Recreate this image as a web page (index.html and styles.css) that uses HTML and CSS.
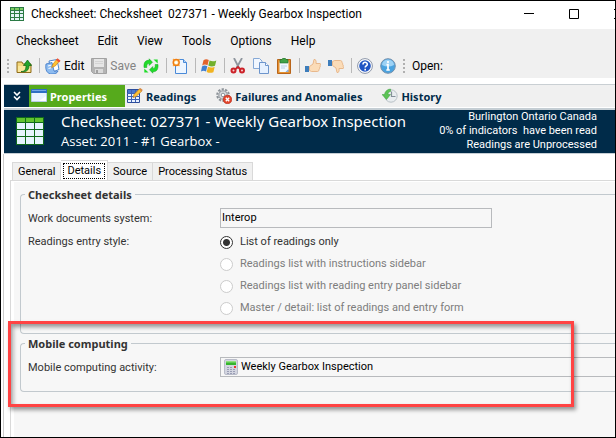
FILE: index.html
```html
<!DOCTYPE html>
<html lang="en">
<head>
    <meta charset="UTF-8">
    <meta name="viewport" content="width=device-width, initial-scale=1.0">
    <title>Checksheet: Checksheet 027371 - Weekly Gearbox Inspection</title>
    <link rel="stylesheet" href="styles.css">
</head>
<body>
<div class="window">
    <header class="titlebar">
        <svg class="title-icon" viewBox="0 0 14 14">
            <rect width="14" height="14" fill="#2b7a45"/>
            <path d="M1 1h3v2H1zM5 1h4v2H5zM10 1h3v2h-3z" fill="#7ccc62"/>
            <path d="M1 4h3v2H1zM5 4h4v2H5zM10 4h3v2h-3zM1 7h3v3H1zM5 7h4v3H5zM10 7h3v3h-3zM1 11h3v2H1zM5 11h4v2H5zM10 11h3v2h-3z" fill="#e3f3f8"/>
        </svg>
        <h1>Checksheet: Checksheet  027371 - Weekly Gearbox Inspection</h1>
        <div class="controls">
            <button type="button" aria-label="Minimize"><svg width="10" height="10" viewBox="0 0 10 10"><path d="M0 4.500h10" stroke="#000"/></svg></button>
            <button type="button" aria-label="Maximize"><svg width="10" height="10" viewBox="0 0 10 10"><path d="M.5.5h9v9h-9z" fill="none" stroke="#000"/></svg></button>
            <button type="button" aria-label="Close"><svg width="10" height="10" viewBox="0 0 10 10"><path d="M0 0l10 10M10 0L0 10" stroke="#000"/></svg></button>
        </div>
    </header>

    <nav class="menubar">
        <button type="button">Checksheet</button>
        <button type="button">Edit</button>
        <button type="button">View</button>
        <button type="button">Tools</button>
        <button type="button">Options</button>
        <button type="button">Help</button>
    </nav>

    <div class="toolbar">
        <span class="grip"></span>
        <button type="button" aria-label="Up">
            <svg viewBox="0 0 16 16">
                <path d="M1 4h5l1 2h8v8.500H1z" fill="#f3d67b" stroke="#8f6d1c"/>
                <path d="M2 8h12v6H2z" fill="#fae79c"/>
                <path d="M5 13.500c4 0 5-2 5-6H7.500L11.500 2l4 5.500H13c0 5-3 7-8 6z" fill="#25a52b" stroke="#0c6414" stroke-width=".7"/>
            </svg>
        </button>
        <span class="sep"></span>
        <button type="button">
            <svg viewBox="0 0 16 16">
                <path d="M4 3l8-1.500 2 10-8 3z" fill="#fff" stroke="#4d86cf"/>
                <path d="M1 6l6-1.500L9 13c2 1 3 1 4 0-1 2.500-3 3-6 3C2 16 0 12 1 6z" fill="#8ebcf0" stroke="#3a76c8" stroke-width=".8"/>
                <path d="M3 8l3-.8M3.500 10.500l3-.8M8 5l3-.6M9 8l3-.6" stroke="#fff"/>
                <path d="M6.500 9.500L8 6l4-5 2.500 2-4.200 5z" fill="#ffc233" stroke="#c47811" stroke-width=".6"/>
                <path d="M11 2l1.500-1.700 3 2.400L14 4.500z" fill="#f0503a"/>
            </svg>
            Edit
        </button>
        <button type="button" class="save" disabled>
            <svg viewBox="0 0 16 16">
                <path d="M.5.5h15v15h-13l-2-2z" fill="#b4b4b4" stroke="#a2a2a2"/>
                <path d="M3 1h10v8H3z" fill="#e6e6e6"/>
                <path d="M4 3.500h8M4 5.500h8" stroke="#d4d4d4"/>
                <path d="M4 11h8v4H4z" fill="#dadada"/>
                <path d="M5 12h2v3H5z" fill="#a0a0a0"/>
            </svg>
            Save
        </button>
        <button type="button" aria-label="Refresh">
            <svg viewBox="0 0 16 16">
                <path d="M1 9.500C.6 4.500 2.500 2 6.200 2.300V.8L9.500 4.200 6.200 7.500V5.600C4.300 5.400 3.600 6.600 3.800 9.500z" fill="#20dc2a" stroke="#0fa51b" stroke-width=".5"/>
                <path d="M15 6.500c.4 5-1.500 7.500-5.200 7.200v1.500L6.500 11.800 9.800 8.500v1.900c1.900.2 2.600-1 2.400-3.900z" fill="#20dc2a" stroke="#0fa51b" stroke-width=".5"/>
                <path d="M10.500 1.500h4.200v4zM5.500 14.500H1.300v-4z" fill="#20dc2a"/>
            </svg>
        </button>
        <span class="sep"></span>
        <button type="button" aria-label="New">
            <svg viewBox="0 0 16 16">
                <path d="M3.500 1.500h8l3 3v11h-11z" fill="#eef6ff" stroke="#4a8ad8"/>
                <path d="M11.500 1.500v3h3" fill="#b8d7f8" stroke="#4a8ad8"/>
                <path d="M1 1l6.500 7M7.500 1L1 8" stroke="#ffae3b" stroke-width="1.200"/>
                <circle cx="4.200" cy="4.500" r="3" fill="#ffd98a" stroke="#f07c13" stroke-width="1.400"/>
                <circle cx="4.200" cy="4.500" r="1.500" fill="#fff"/>
            </svg>
        </button>
        <span class="sep"></span>
        <button type="button" aria-label="Windows">
            <svg viewBox="0 0 16 16">
                <path d="M2.500 2.200c2-1.400 3.500-1.200 5.300-.2L6.500 7.200c-2-1-3.500-1-5.300.2z" fill="#e2632b"/>
                <path d="M8.600 2.500c2 1 4 1.200 6.700 0L14 7.800c-2.500 1-4.600.8-6.700-.2z" fill="#72b02c"/>
                <path d="M1 8.400c2-1.400 3.500-1.200 5.300-.2L5 13.400c-2-1-3.200-1-5 .2z" fill="#3f7fd0"/>
                <path d="M7 8.700c2 1 4 1.200 6.700 0l-1.300 5.500c-2.500 1-4.600.8-6.700-.2z" fill="#f1b321"/>
            </svg>
        </button>
        <span class="sep"></span>
        <button type="button" aria-label="Cut">
            <svg viewBox="0 0 16 16">
                <path d="M4 0l5 10M12 0L6.500 10" stroke="#8f969e" stroke-width="1.800"/>
                <circle cx="3.500" cy="12.500" r="2" fill="#f6d2d2" stroke="#cc2229" stroke-width="2"/>
                <circle cx="12" cy="12.500" r="2" fill="#f6d2d2" stroke="#cc2229" stroke-width="2"/>
                <path d="M5 11.500L8 9l2.500 2.500" fill="none" stroke="#cc2229" stroke-width="1.800"/>
            </svg>
        </button>
        <button type="button" aria-label="Copy">
            <svg viewBox="0 0 16 16">
                <path d="M.5.5h6l2.500 2.500v7.500H.5z" fill="#f1f7ff" stroke="#86a9d6"/>
                <path d="M6.500 4.500h6l3 3v8h-9z" fill="#e6f1ff" stroke="#6d95cc"/>
                <path d="M12.500 4.500v3h3" fill="#fff" stroke="#6d95cc"/>
            </svg>
        </button>
        <button type="button" aria-label="Paste">
            <svg viewBox="0 0 16 16">
                <path d="M1.500 1.500h13v14h-13z" fill="#e5902e" stroke="#b9651a"/>
                <path d="M3.500 3.500h9v8l-2.500 2.500H3.500z" fill="#f2f9ff"/>
                <path d="M5 8h6M5 10h4" stroke="#b9cfe6"/>
                <path d="M12.500 11v3H9.500z" fill="#8ab4e4"/>
                <path d="M4 1.500h2L7 0h2l1 1.500h2V5H4z" fill="#41a348" stroke="#1f6c2b" stroke-width=".6"/>
            </svg>
        </button>
        <span class="sep"></span>
        <button type="button" aria-label="Approve">
            <svg viewBox="0 0 16 16">
                <path d="M0 8h4v6H0z" fill="#3d7dbb"/>
                <path d="M4.500 8.500L8 6l1-4.500c1.500-.5 2.500 1 2 4h4c1 0 .8 2 0 2 .5 1 .3 2-.5 2.200.3 1 0 1.800-.7 2 .2 1-.3 1.800-1.300 1.800h-6l-2-1z" fill="#fbdcb8" stroke="#e6b283" stroke-width=".9"/>
            </svg>
        </button>
        <button type="button" aria-label="Reject">
            <svg viewBox="0 0 16 16">
                <path d="M0 2h4v6H0z" fill="#3d7dbb"/>
                <path d="M4.500 7.500L8 10l1 4.500c1.500.5 2.500-1 2-4h4c1 0 .8-2 0-2 .5-1 .3-2-.5-2.200.3-1 0-1.800-.7-2 .2-1-.3-1.800-1.300-1.800h-6l-2 1z" fill="#fbdcb8" stroke="#e6b283" stroke-width=".9"/>
            </svg>
        </button>
        <span class="sep"></span>
        <button type="button" aria-label="Help">
            <svg viewBox="0 0 16 16">
                <circle cx="8" cy="8" r="7.400" fill="#fff" stroke="#8b95a8"/>
                <circle cx="8" cy="8" r="5.800" fill="#2155c4"/>
                <path d="M6 6.500c0-3 4.300-2.800 4.300-.3C10.300 7.800 8.200 8 8.200 9.500M8.200 10.800v1.600" fill="none" stroke="#fff" stroke-width="1.600"/>
            </svg>
        </button>
        <button type="button" aria-label="Info">
            <svg viewBox="0 0 16 16">
                <circle cx="8" cy="8" r="7.300" fill="#4aa3e0" stroke="#7690ab"/>
                <path d="M2 7a6 5.500 0 0 1 12 0q-6 3-12 0z" fill="#9dd2f5"/>
                <path d="M8 3v2M6.500 6.700H8V12M6.300 12h3.500" fill="none" stroke="#fff" stroke-width="1.700"/>
            </svg>
        </button>
        <span class="grip"></span>
        <span class="open-label">Open:</span>
    </div>

    <nav class="views">
        <button type="button" class="expand" aria-label="More views">
            <svg width="8" height="10" viewBox="0 0 8 10"><path d="M1 1l3 3 3-3M1 5.500l3 3 3-3" fill="none" stroke="#fff" stroke-width="1.600"/></svg>
        </button>
        <a href="#" class="view current">
            <svg viewBox="0 0 16 16">
                <path d="M.5 1.500h15v12H.5z" fill="#eaf4ff" stroke="#b9cde6"/>
                <path d="M0 1h16v4H0z" fill="#2f6fc4"/>
                <path d="M1 2h14v1H1z" fill="#75a8e6"/>
                <path d="M8 13l7-5v5z" fill="#fff"/>
            </svg>
            Properties
        </a>
        <a href="#" class="view">
            <svg viewBox="0 0 16 16">
                <path d="M.5 1.500h12v13H.5z" fill="#e8f1ff" stroke="#2c4d9c"/>
                <path d="M1 2h11v3H1z" fill="#4a78d0"/>
                <path d="M0 5.500h13M0 8.500h13M0 11.500h13M4.500 2v12M8.500 2v12" stroke="#3e62b4"/>
                <path d="M6 9.500L7 6.500 12.500.8l2.500 2L9 8.600z" fill="#ffc233" stroke="#b8741a" stroke-width=".7"/>
                <path d="M12 1.300L13.300 0l2.500 2.100L14.500 3.500z" fill="#d78b45"/>
            </svg>
            Readings
        </a>
        <a href="#" class="view">
            <svg viewBox="0 0 16 16">
                <circle cx="7" cy="7" r="5.800" fill="none" stroke="#8c9298" stroke-width="2" stroke-dasharray="2.300 1.300"/>
                <circle cx="7" cy="7" r="4.200" fill="#d9dcdf" stroke="#8c9298"/>
                <circle cx="7" cy="7" r="1.800" fill="#fff" stroke="#8c9298"/>
                <circle cx="11.500" cy="11.500" r="4.300" fill="#e2452c" stroke="#b42513" stroke-width=".6"/>
                <path d="M9.800 9.800l3.400 3.400M13.200 9.800l-3.400 3.400" stroke="#fff" stroke-width="1.400"/>
            </svg>
            Failures and Anomalies
        </a>
        <a href="#" class="view">
            <svg viewBox="0 0 16 16">
                <circle cx="9" cy="8" r="6.200" fill="#e9edf0" stroke="#b9c1c6"/>
                <path d="M9.500 3.500V8.500h4" fill="none" stroke="#84909a" stroke-width="1.200"/>
                <path d="M8.500 1C5 1.200 3 3.500 2.500 6.500H0L4.500 11.500 8.500 6.500H6C6 4.700 7 3.800 8.500 3.500z" fill="#5cc455" stroke="#3d9c3c" stroke-width=".5"/>
            </svg>
            History
        </a>
    </nav>

    <section class="banner">
        <svg class="banner-icon" viewBox="0 0 28 28">
            <rect width="28" height="28" fill="#0f6a1c"/>
            <path d="M1 1h8v4H1zM10 1h8v4h-8zM19 1h8v4h-8z" fill="#62c52f"/>
            <path d="M1 6h8v6H1zM10 6h8v6h-8zM19 6h8v6h-8zM1 13h8v6H1zM10 13h8v6h-8zM19 13h8v6h-8zM1 20h8v7H1zM10 20h8v7h-8zM19 20h8v7h-8z" fill="#e6f4ff"/>
        </svg>
        <div class="banner-text">
            <h2>Checksheet: 027371 - Weekly Gearbox Inspection</h2>
            <p>Asset: 2011 - #1 Gearbox -</p>
        </div>
        <div class="banner-status">
            <p>Burlington Ontario Canada</p>
            <p>0% of indicators  have been read</p>
            <p>Readings are Unprocessed</p>
        </div>
    </section>

    <main class="content">
        <div class="tabs" role="tablist">
            <button type="button" role="tab">General</button>
            <button type="button" role="tab" class="active" aria-selected="true"><span>Details</span></button>
            <button type="button" role="tab">Source</button>
            <button type="button" role="tab">Processing Status</button>
        </div>
        <form class="panel">
            <fieldset>
                <legend>Checksheet details</legend>
                <div class="row">
                    <label for="system">Work documents system:</label>
                    <input type="text" id="system" class="text-field" value="Interop" readonly>
                </div>
                <div class="row style-row">
                    <span id="style-label">Readings entry style:</span>
                    <div class="options" role="radiogroup" aria-labelledby="style-label">
                        <label><input type="radio" name="style" checked>List of readings only</label>
                        <label class="off"><input type="radio" name="style" disabled>Readings list with instructions sidebar</label>
                        <label class="off"><input type="radio" name="style" disabled>Readings list with reading entry panel sidebar</label>
                        <label class="off"><input type="radio" name="style" disabled>Master / detail: list of readings and entry form</label>
                    </div>
                </div>
            </fieldset>
            <fieldset>
                <legend>Mobile computing</legend>
                <div class="row">
                    <label for="activity">Mobile computing activity:</label>
                    <div class="lookup">
                        <svg viewBox="0 0 14 16">
                            <rect x=".5" y=".5" width="13" height="15" rx="1.500" fill="#d3d5e0" stroke="#b9bcc9"/>
                            <path d="M2 2h10v4H2z" fill="#35b52d"/>
                            <path d="M2 2h10v1.500H2z" fill="#8fe07c"/>
                            <path d="M3 8.500h5M3 10.500h8M3 12.500h8M3 14.500h8" stroke="#9a9eb5" stroke-dasharray="2 1"/>
                            <path d="M10 7h2v2h-2z" fill="#e8342c"/>
                        </svg>
                        <input type="text" id="activity" value="Weekly Gearbox Inspection">
                    </div>
                </div>
            </fieldset>
            <div class="highlight"></div>
        </form>
    </main>
</div>
</body>
</html>
```
FILE: styles.css
```css
* {
    box-sizing: border-box;
}

body {
    margin: 0;
    font-family: Roboto, "Open Sans", sans-serif;
    font-size: 11px;
    color: #333;
}

h1, h2, p {
    margin: 0;
    font-weight: normal;
    white-space: pre;
}

button, input {
    font: inherit;
    color: inherit;
}

button {
    border: 0;
    padding: 0;
    background: none;
}

svg {
    display: block;
    flex: none;
}

.window {
    display: flex;
    flex-direction: column;
    min-height: 100vh;
    border: 1px solid #000;
    background-color: #fff;
    overflow: hidden;
}

/* title bar */
.titlebar {
    display: flex;
    align-items: center;
    height: 28px;
    padding: 0 0 2px 9px;
    color: #000;
}

.title-icon {
    width: 14px;
    height: 14px;
}

.titlebar h1 {
    flex: 1;
    margin-left: 7px;
    font-size: 12px;
}

.controls {
    display: flex;
    margin-right: -26px;
}

.controls button {
    display: flex;
    align-items: center;
    justify-content: center;
    width: 45px;
    height: 24px;
}

/* menu and toolbar */
.menubar {
    display: flex;
    align-items: center;
    gap: 19px;
    height: 24px;
    padding-left: 15px;
    background-color: #f0f0f0;
    font-size: 12px;
    color: #000;
}

.toolbar {
    display: flex;
    align-items: center;
    gap: 7px;
    height: 26px;
    padding: 0 6px;
    border-bottom: 1px solid #fff;
    background-color: #f0f0f0;
    font-size: 12px;
    color: #000;
}

.toolbar button {
    display: flex;
    align-items: center;
    gap: 3px;
}

.toolbar svg {
    width: 16px;
    height: 16px;
}

.toolbar .save {
    color: #838383;
}

.toolbar .sep + button {
    margin-left: -2px;
}

.sep {
    width: 1px;
    height: 15px;
    background-color: #b8b8b8;
}

.grip {
    width: 2px;
    height: 14px;
    background: repeating-linear-gradient(#b0b0b0 0 2px, transparent 2px 4px);
}

/* view switcher */
.views {
    display: flex;
    height: 24px;
    margin: 5px 0 0 3px;
    border-top: 1px solid #c9cfd3;
    border-bottom: 1px solid #fff;
    background-color: #f0f0f0;
    font-family: "Noto Sans", sans-serif;
    font-weight: bold;
}

.expand {
    display: flex;
    align-items: center;
    justify-content: center;
    width: 25px;
    background-color: #002b49;
}

.view {
    display: flex;
    align-items: center;
    gap: 3px;
    padding: 0 18px 0 2px;
    color: #002b49;
    text-decoration: none;
}

.view svg {
    width: 16px;
    height: 16px;
}

.view.current {
    background-color: #56aa1c;
    color: #fff;
}

/* record banner */
.banner {
    display: flex;
    height: 46px;
    margin-left: 3px;
    padding: 0 18px 0 12px;
    border-top: 2px solid #c5ced4;
    border-bottom: 1px solid #c5ced4;
    background-color: #002b49;
    color: #fff;
}

.banner-icon {
    width: 28px;
    height: 28px;
    margin-top: 7px;
}

.banner-text {
    flex: 1;
    margin-left: 17px;
}

.banner h2 {
    font-family: "Noto Sans", sans-serif;
    font-size: 15px;
    line-height: 22px;
}

.banner-text p {
    font-family: "Open Sans", sans-serif;
    font-size: 13px;
    line-height: 19px;
}

.banner-status {
    text-align: right;
    line-height: 14px;
}

/* tabs */
.content {
    display: flex;
    flex: 1;
    flex-direction: column;
    margin-left: 2px;
    padding: 6px 0 0 6px;
    border-left: 1px solid #ccc;
}

.tabs {
    display: flex;
    align-items: flex-end;
    height: 20px;
    padding-left: 2px;
    color: #000;
}

.tabs button {
    height: 18px;
    padding: 0 5px;
    border: 1px solid #d9d9d9;
    border-width: 1px 1px 0 0;
    background-color: #f0f0f0;
}

.tabs button:first-child {
    border-left-width: 1px;
}

.tabs .active {
    height: 20px;
    padding: 0 2px;
    background-color: #fff;
}

.active span {
    display: block;
    padding: 0 3px;
    border: 1px dotted #000;
    line-height: 14px;
}

.panel {
    position: relative;
    flex: 1;
    padding: 6px 0 0 6px;
    border: 1px solid #d9d9d9;
    border-width: 1px 0 0 1px;
    box-shadow: inset 3px 1px #fff;
    background-color: #f7f7f7;
}

/* forms */
fieldset {
    min-width: 0;
    margin: 0 0 2px 3px;
    padding: 6px 0 14px 7px;
    border: 1px solid #c2c9ce;
    border-right: 0;
    border-radius: 4px 0 0 4px;
}

legend {
    margin-left: -3px;
    padding: 0 3px;
    font-family: "Noto Sans", sans-serif;
    font-weight: bold;
    line-height: 15px;
}

.row {
    display: flex;
    align-items: center;
}

.row > :first-child {
    width: 192px;
    flex: none;
}

.text-field {
    width: 272px;
    height: 20px;
    padding: 0 1px 2px;
    border: 1px solid #b8babd;
    background: none;
    color: #000;
}

.style-row {
    align-items: flex-start;
    margin-top: 3px;
    line-height: 22px;
}

.options label {
    display: flex;
    align-items: center;
    gap: 7px;
}

.options .off {
    color: #7d7d7d;
}

.options input {
    appearance: none;
    width: 13px;
    height: 13px;
    margin: 0;
    border: 1px solid #ccc;
    border-radius: 50%;
    background-color: #fff;
}

.options input:checked {
    border-color: #333;
    background: radial-gradient(#333 0 3px, #fff 4px);
}

.lookup {
    display: flex;
    flex: 1;
    align-items: center;
    gap: 3px;
    height: 20px;
    padding-left: 3px;
    border: 1px solid #b8babd;
    border-right: 0;
    color: #000;
}

.lookup svg {
    width: 14px;
    height: 16px;
}

.lookup input {
    flex: 1;
    min-width: 0;
    padding: 0 0 2px;
    border: 0;
    background: none;
}

/* callout drawn over the mobile section */
.highlight {
    position: absolute;
    top: 140px;
    left: -3px;
    right: 41px;
    height: 86px;
    border: 3px solid #ff4343;
    box-shadow: 2px 3px 4px rgba(0, 0, 0, 0.4), inset 2px 3px 4px rgba(0, 0, 0, 0.4);
    pointer-events: none;
}
```
